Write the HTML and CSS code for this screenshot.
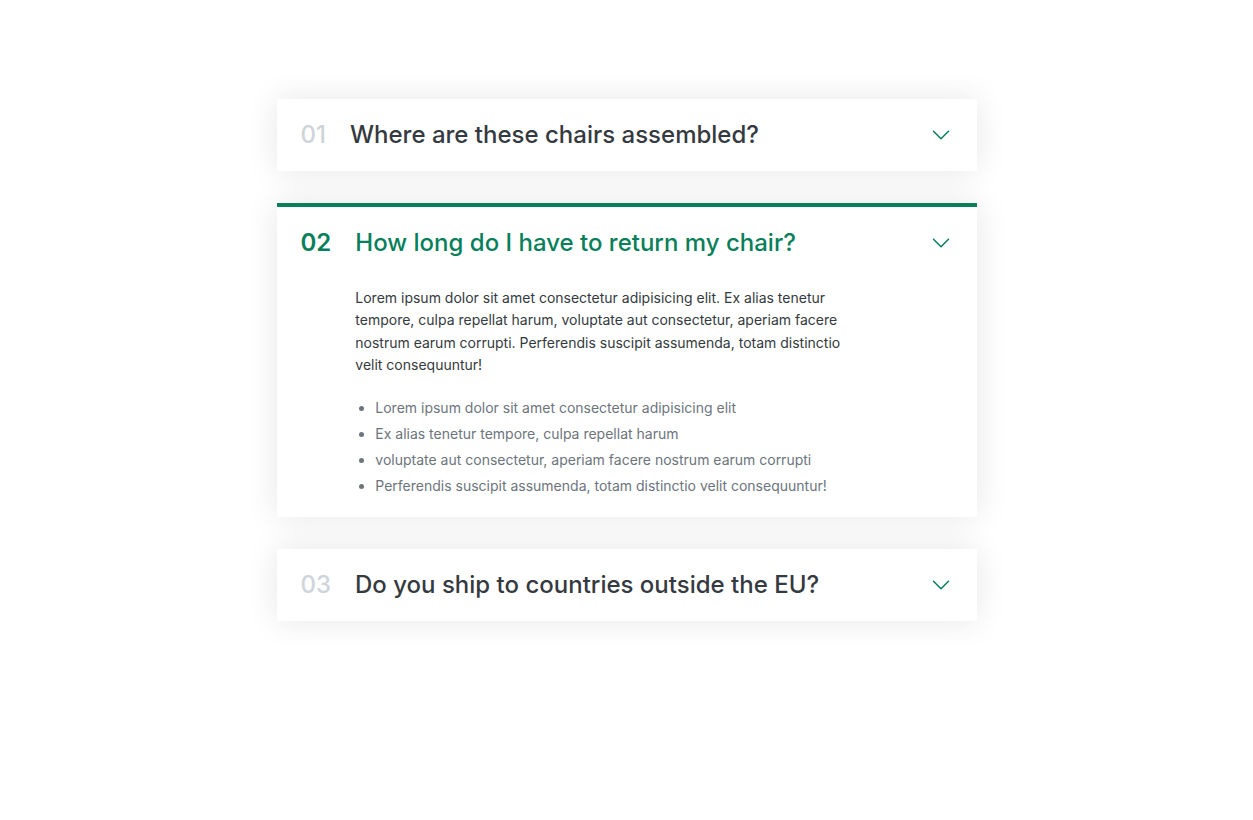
FILE: index.html
```html
<!DOCTYPE html>
<html lang="en">
<head>
<meta charset="utf-8">
<title>Accordion</title>
<link rel="stylesheet" href="styles.css">
</head>
<body>
<div class="accordion">
  <div class="item">
    <p class="number">01</p>
    <p class="title">Where are these chairs assembled?</p>
    <svg class="icon" viewBox="0 0 24 24" fill="none" stroke="currentColor" stroke-width="1.5"><path stroke-linecap="round" stroke-linejoin="round" d="m19.5 8.25-7.5 7.5-7.5-7.5"/></svg>
  </div>
  <div class="item open">
    <p class="number">02</p>
    <p class="title">How long do I have to return my chair?</p>
    <svg class="icon" viewBox="0 0 24 24" fill="none" stroke="currentColor" stroke-width="1.5"><path stroke-linecap="round" stroke-linejoin="round" d="m19.5 8.25-7.5 7.5-7.5-7.5"/></svg>
    <div class="hidden-box">
      <p>Lorem ipsum dolor sit amet consectetur adipisicing elit. Ex alias tenetur tempore, culpa repellat harum, voluptate aut consectetur, aperiam facere nostrum earum corrupti. Perferendis suscipit assumenda, totam distinctio velit consequuntur!</p>
      <ul>
        <li>Lorem ipsum dolor sit amet consectetur adipisicing elit</li>
        <li>Ex alias tenetur tempore, culpa repellat harum</li>
        <li>voluptate aut consectetur, aperiam facere nostrum earum corrupti</li>
        <li>Perferendis suscipit assumenda, totam distinctio velit consequuntur!</li>
      </ul>
    </div>
  </div>
  <div class="item">
    <p class="number">03</p>
    <p class="title">Do you ship to countries outside the EU?</p>
    <svg class="icon" viewBox="0 0 24 24" fill="none" stroke="currentColor" stroke-width="1.5"><path stroke-linecap="round" stroke-linejoin="round" d="m19.5 8.25-7.5 7.5-7.5-7.5"/></svg>
  </div>
</div>
</body>
</html>
```
FILE: styles.css
```css
* { margin: 0; padding: 0; box-sizing: border-box; }
html, body { min-height: 100vh; }
body {
  font-family: Inter, "Noto Sans", sans-serif;
  color: #343a40;
  background: #fff;
  padding: 99px 0 100px;
}
.accordion {
  width: 700px;
  margin: 0 auto;
  display: flex;
  flex-direction: column;
  gap: 32px;
}
.item {
  box-shadow: 0 0 32px rgba(0, 0, 0, 0.1);
  padding: 24px;
  display: grid;
  grid-template-columns: auto 1fr auto;
  column-gap: 24px;
  row-gap: 32px;
  align-items: center;
  background: #fff;
}
.number, .title {
  font-size: 24px;
  line-height: 24px;
  font-weight: 500;
}
.number { color: #ced4da; }
.icon { width: 24px; height: 24px; color: #087f5b; display: block; }
.open { border-top: 4px solid #087f5b; padding-bottom: 20px; }
.open .number, .open .title { color: #087f5b; }
.open .number { font-weight: 600; }
.hidden-box {
  grid-column: 2;
  font-size: 14px;
  line-height: 1.6;
}
.hidden-box p { max-width: 490px; margin-bottom: 20px; color: #343a40; }
.hidden-box ul {
  color: #6c757d;
  margin-left: 20px;
  display: flex;
  flex-direction: column;
  gap: 3.6px;
}
```
